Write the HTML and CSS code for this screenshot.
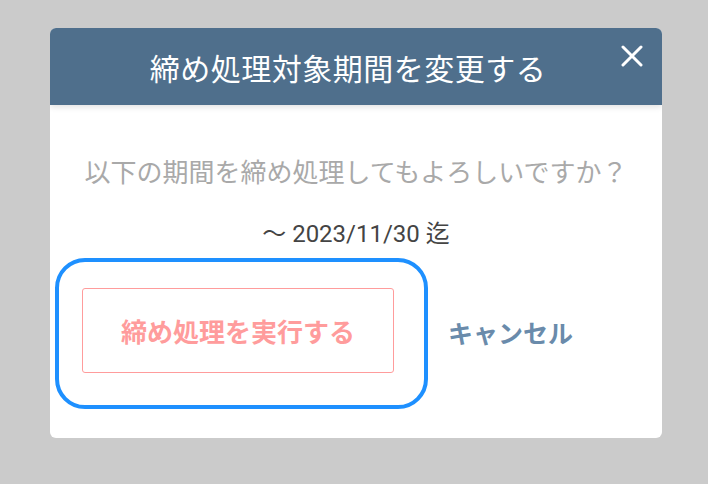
FILE: index.html
```html
<!DOCTYPE html>
<html lang="ja">
<head>
  <meta charset="UTF-8">
  <meta name="viewport" content="width=device-width, initial-scale=1.0">
  <title>締め処理対象期間を変更する</title>
  <link rel="stylesheet" href="styles.css">
</head>
<body>

  <div class="modal">
    <div class="modal-header">
      <h2 class="modal-title">締め処理対象期間を変更する</h2>
      <button class="close-btn" aria-label="閉じる">
        <svg width="22" height="22" viewBox="0 0 22 22">
          <path d="M2 2 L20 20 M20 2 L2 20" stroke="#fff" stroke-width="3" stroke-linecap="round" fill="none"/>
        </svg>
      </button>
    </div>

    <div class="modal-body">
      <p class="question">以下の期間を締め処理してもよろしいですか？</p>
      <p class="period">〜 2023/11/30 迄</p>

      <div class="actions">
        <div class="focus-ring">
          <button class="run-btn">締め処理を実行する</button>
        </div>
        <button class="cancel-btn">キャンセル</button>
      </div>
    </div>
  </div>

</body>
</html>
```

FILE: styles.css
```css
* { margin: 0; padding: 0; box-sizing: border-box; }
body {
  font-family: "Noto Sans CJK JP", "Noto Sans", sans-serif;
  background-color: #cbcbcb;
  padding: 28px 0 0 50px;
  min-height: 484px;
}
.modal {
  width: 612px;
  background: white;
  border-radius: 6px;
  overflow: hidden;
  padding-bottom: 29px;
}
.modal-header {
  position: relative;
  height: 77px;
  background-color: #4f6f8c;
  display: flex;
  align-items: center;
  justify-content: center;
  padding-right: 16px;
  box-shadow: 0 2px 6px rgba(0, 0, 0, 0.12);
}
.modal-title {
  color: white;
  font-size: 30px;
  font-weight: 400;
  letter-spacing: 0.5px;
}
.close-btn {
  position: absolute;
  top: 17px;
  right: 19px;
  width: 22px;
  height: 22px;
  background: none;
  border: none;
  cursor: pointer;
  display: flex;
}
.modal-body {
  padding-top: 48px;
  display: flex;
  flex-direction: column;
  align-items: center;
}
.question {
  color: #a9a9a9;
  font-size: 26px;
  line-height: 36px;
}
.period {
  color: #444;
  font-family: Roboto, "Noto Sans CJK JP", sans-serif;
  font-size: 24px;
  line-height: 30px;
  margin-top: 30px;
}
.actions {
  align-self: flex-start;
  display: flex;
  align-items: center;
  margin: 9px 0 0 5px;
}
.focus-ring {
  border: 4px solid #1e90ff;
  border-radius: 30px;
  padding: 26px 30px 32px 23px;
}
.run-btn {
  width: 312px;
  height: 85px;
  background: white;
  border: 1.5px solid #ff9c9c;
  border-radius: 3px;
  color: #ff9c9c;
  font-family: inherit;
  font-size: 26px;
  font-weight: 700;
  cursor: pointer;
}
.cancel-btn {
  margin: 0 0 4px 20px;
  background: none;
  border: none;
  color: #6a8bab;
  font-family: inherit;
  font-size: 25px;
  font-weight: 700;
  cursor: pointer;
}
```
